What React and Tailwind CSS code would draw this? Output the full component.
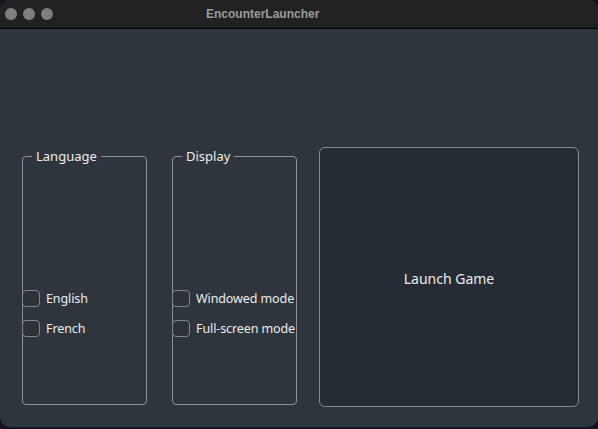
export default function App() {
  const font = { fontFamily: '"Noto Sans", "DejaVu Sans", sans-serif' }

  const Group = ({ title, options }) => (
    <fieldset className="w-[125px] min-w-0 h-[257px] border border-[#8d9398] rounded-[4px] px-0">
      <legend className="ml-[9px] px-[4px] text-[13px] leading-[16px] text-[#ecedee]">{title}</legend>
      <div className="flex flex-col gap-[13px] mt-[126px] -ml-px">
        {options.map(o => (
          <div key={o} className="flex items-center gap-[6px] h-[17px] whitespace-nowrap">
            <span className="w-[18px] h-[17px] shrink-0 rounded-[4px] border border-[#80868c] bg-[#2c3238]"></span>
            <span className="text-[12.5px] leading-[17px] tracking-[-0.1px] text-[#ecedee]">{o}</span>
          </div>
        ))}
      </div>
    </fieldset>
  )

  return (
    <div className="w-[598px] h-[429px] bg-[#17141f] overflow-hidden" style={font}>
      <div className="h-[427px] flex flex-col rounded-[10px] overflow-hidden bg-[#2f353c]">
        <div className="h-[29px] shrink-0 bg-[#212121] border-b border-black flex items-center relative">
          <div className="flex gap-[6px] pl-[5px]">
            <span className="w-[12px] h-[12px] rounded-full bg-[#7f7f7f]"></span>
            <span className="w-[12px] h-[12px] rounded-full bg-[#7f7f7f]"></span>
            <span className="w-[12px] h-[12px] rounded-full bg-[#7f7f7f]"></span>
          </div>
          <div
            className="absolute left-[206px] top-0 h-[28px] flex items-center text-[12px] font-bold text-[#9c9c9c]"
            style={{ fontFamily: '"Liberation Sans", Arial, sans-serif' }}
          >
            EncounterLauncher
          </div>
        </div>
        <div className="flex items-start pl-[22px] pt-[119px]">
          <Group title="Language" options={['English', 'French']} />
          <div className="ml-[25px]">
            <Group title="Display" options={['Windowed mode', 'Full-screen mode']} />
          </div>
          <button className="ml-[22px] -mt-px w-[260px] h-[260px] shrink-0 rounded-[6px] border border-[#858b90] bg-[#262c33] text-[14px] text-[#eceded] flex items-center justify-center pt-[3px]">
            Launch Game
          </button>
        </div>
      </div>
    </div>
  )
}
